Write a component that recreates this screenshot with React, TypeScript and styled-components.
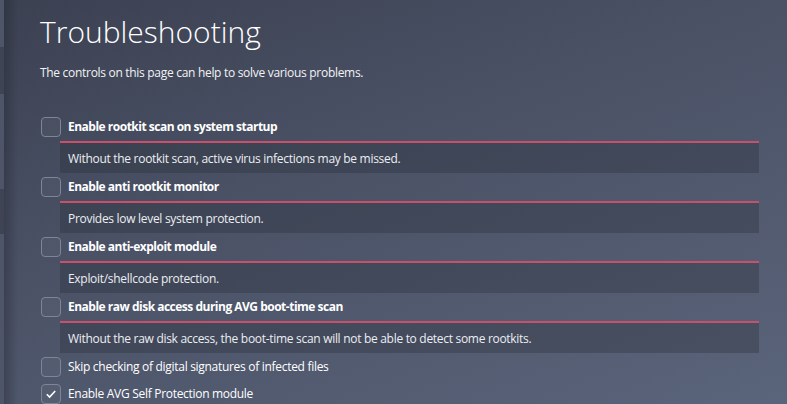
import React from "react";
import styled, { createGlobalStyle } from "styled-components";

const GlobalStyle = createGlobalStyle`
  html, body {
    margin: 0;
    padding: 0;
    height: 100%;
    overflow: hidden;
  }
  body {
    font-family: "Open Sans", "Noto Sans", sans-serif;
    background: #4b5265;
  }
`;

const Page = styled.div`
  display: flex;
  width: 787px;
  height: 404px;
  overflow: hidden;
  background: linear-gradient(160deg, #3b4151 0%, #4a5165 40%, #5a647a 100%);
`;

const Sidebar = styled.div`
  width: 4px;
  display: flex;
  flex-direction: column;
`;

const SideBlock = styled.div<{ $h: number; $dark?: boolean }>`
  height: ${({ $h }) => $h}px;
  flex-shrink: 0;
  background: ${({ $dark }) => ($dark ? "#3e4454" : "#4e5568")};
`;

const Main = styled.main`
  flex: 1;
  padding: 14px 28px 0 36px;
  background: linear-gradient(90deg, rgba(30, 33, 43, 0.35) 0px, rgba(30, 33, 43, 0) 14px);
`;

const Title = styled.h1`
  margin: 0;
  font-weight: 300;
  font-size: 30px;
  line-height: 36px;
  color: #ffffff;
`;

const Intro = styled.p`
  margin: 15px 0 0;
  font-size: 12px;
  letter-spacing: -0.3px;
  line-height: 16px;
  color: #f2f3f6;
`;

const List = styled.div`
  display: flex;
  flex-direction: column;
  margin-top: 36px;
`;

const Option = styled.div`
  display: flex;
  flex-direction: column;
  margin-bottom: 4px;
`;

const Header = styled.label<{ $compact?: boolean }>`
  display: flex;
  align-items: flex-start;
  height: ${({ $compact }) => ($compact ? 20 : 24)}px;
  padding-left: 1px;
`;

const Box = styled.span`
  width: 18px;
  height: 18px;
  flex-shrink: 0;
  border: 1px solid #7d8597;
  border-radius: 4px;
  background: rgba(255, 255, 255, 0.04);
  display: flex;
  align-items: center;
  justify-content: center;
`;

const Label = styled.span<{ $bold?: boolean }>`
  margin-left: 7px;
  font-size: 12px;
  line-height: 20px;
  color: #ffffff;
  font-weight: ${({ $bold }) => ($bold ? 700 : 400)};
  letter-spacing: ${({ $bold }) => ($bold ? -0.5 : -0.3)}px;
`;

const Description = styled.div`
  margin-left: 20px;
  height: 32px;
  box-sizing: border-box;
  border-top: 2px solid #c94f6b;
  background: rgba(38, 42, 54, 0.32);
  padding-left: 8px;
  display: flex;
  align-items: center;
  font-size: 12px;
  letter-spacing: -0.3px;
  color: #eceef3;
`;

const Plain = styled.div`
  display: flex;
  flex-direction: column;
  gap: 7px;
`;

const Check = () => (
  <svg width="12" height="10" viewBox="0 0 12 10">
    <path d="M1.8 5.2 L4.6 8 L10.2 2" fill="none" stroke="#fff" strokeWidth="1.6" />
  </svg>
);

const options = [
  {
    title: "Enable rootkit scan on system startup",
    desc: "Without the rootkit scan, active virus infections may be missed.",
  },
  { title: "Enable anti rootkit monitor", desc: "Provides low level system protection." },
  { title: "Enable anti-exploit module", desc: "Exploit/shellcode protection." },
  {
    title: "Enable raw disk access during AVG boot-time scan",
    desc: "Without the raw disk access, the boot-time scan will not be able to detect some rootkits.",
  },
];

const App: React.FC = () => (
  <>
    <GlobalStyle />
    <Page>
      <Sidebar>
        <SideBlock $h={47} />
        <SideBlock $h={47} $dark />
        <SideBlock $h={95} />
        <SideBlock $h={45} $dark />
        <SideBlock $h={170} />
      </Sidebar>
      <Main>
        <Title>Troubleshooting</Title>
        <Intro>The controls on this page can help to solve various problems.</Intro>
        <List>
          {options.map((o) => (
            <Option key={o.title}>
              <Header>
                <Box />
                <Label $bold>{o.title}</Label>
              </Header>
              <Description>{o.desc}</Description>
            </Option>
          ))}
          <Plain>
            <Header $compact>
              <Box />
              <Label>Skip checking of digital signatures of infected files</Label>
            </Header>
            <Header $compact>
              <Box>
                <Check />
              </Box>
              <Label>Enable AVG Self Protection module</Label>
            </Header>
          </Plain>
        </List>
      </Main>
    </Page>
  </>
);

export default App;
